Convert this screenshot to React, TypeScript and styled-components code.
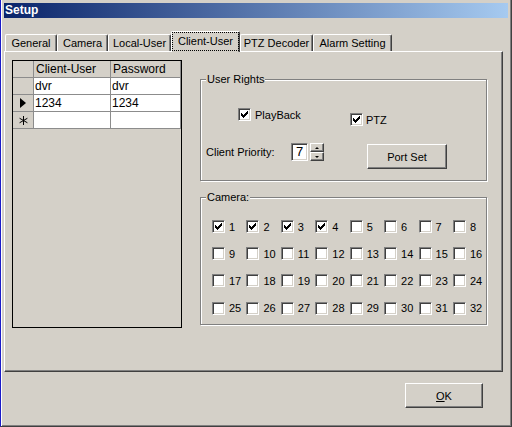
import React from 'react';
import styled, { createGlobalStyle } from 'styled-components';

const GlobalStyle = createGlobalStyle`
  html, body {
    margin: 0;
    padding: 0;
    background: #d4d0c8;
  }
  body {
    font-family: "Liberation Sans", Arial, sans-serif;
    font-size: 11px;
    color: #000;
  }
`;

const Window = styled.div`
  box-sizing: border-box;
  width: 512px;
  height: 427px;
  display: flex;
  flex-direction: column;
  padding: 3px 3px 0 3px;
  background: #d4d0c8;
  border-left: 1px solid #1c1cc8;
  border-right: 1px solid #404040;
  border-bottom: 1px solid #404040;
  box-shadow: inset 1px 0 0 #fff, inset -1px -1px 0 #808080;
`;

const TitleBar = styled.div`
  height: 15px;
  line-height: 15px;
  padding-left: 1px;
  background: linear-gradient(to right, #0a246a, #a6caf0);
  color: #fff;
  font-weight: bold;
  font-size: 12px;
`;

const TabStrip = styled.div`
  display: flex;
  align-items: flex-end;
  height: 20px;
  margin-top: 13px;
  padding-left: 1px;
  position: relative;
  z-index: 1;
`;

const Tab = styled.div<{ $w: number; $active?: boolean }>`
  box-sizing: border-box;
  width: ${p => p.$w}px;
  height: ${p => (p.$active ? 21 : 17)}px;
  margin-bottom: ${p => (p.$active ? -1 : 0)}px;
  padding-top: ${p => (p.$active ? 2 : 1)}px;
  line-height: 14px;
  text-align: center;
  white-space: nowrap;
  background: #d4d0c8;
  border-top: 1px solid #fff;
  border-left: 1px solid #fff;
  border-right: 1px solid #404040;
  border-top-left-radius: 2px;
  border-top-right-radius: 2px;
  box-shadow: inset -1px 0 0 #808080;
  outline: ${p => (p.$active ? '1px dotted #000' : 'none')};
  outline-offset: -2px;
`;

const Panel = styled.div`
  box-sizing: border-box;
  width: 499px;
  height: 321px;
  display: flex;
  align-items: flex-start;
  gap: 18px;
  padding: 8px 0 0 7px;
  border: 1px solid;
  border-color: #fff #404040 #404040 #fff;
  box-shadow: inset -1px -1px 0 #808080;
`;

const GridFrame = styled.div`
  box-sizing: border-box;
  width: 170px;
  height: 268px;
  border: 1px solid #000;
  background: #d4d0c8;
  font-size: 12px;
`;

const GridRows = styled.div`
  display: grid;
  grid-template-columns: 20px 76px 69px;
  grid-auto-rows: 16px;
  gap: 1px;
  width: fit-content;
  background: #8c8c8c;
  border-right: 1px solid #8c8c8c;
  border-bottom: 1px solid #8c8c8c;
`;

const Cell = styled.div<{ $head?: boolean }>`
  background: ${p => (p.$head ? '#d4d0c8' : '#fff')};
  padding-left: ${p => (p.$head ? 2 : 1)}px;
  line-height: 16px;
  white-space: nowrap;
  overflow: hidden;
`;

const RowHead = styled.div`
  background: #d4d0c8;
  display: flex;
  align-items: center;
  justify-content: center;
`;

const RightCol = styled.div`
  width: 287px;
  margin-top: 19px;
  display: flex;
  flex-direction: column;
  gap: 16px;
`;

const GroupBox = styled.div<{ $h: number; $pt: number; $pl: number }>`
  box-sizing: border-box;
  position: relative;
  height: ${p => p.$h}px;
  padding: ${p => p.$pt}px 0 0 ${p => p.$pl}px;
  border: 1px solid #808080;
  box-shadow: inset 1px 1px 0 #fff, 1px 1px 0 #fff;
`;

const Legend = styled.span`
  position: absolute;
  top: -7px;
  left: 5px;
  padding: 0 1px;
  line-height: 13px;
  background: #d4d0c8;
`;

const CheckRow = styled.div`
  display: flex;
  align-items: flex-start;
`;

const CheckItem = styled.label<{ $w?: number; $down?: number; $gap?: number }>`
  display: flex;
  align-items: center;
  gap: ${p => p.$gap ?? 4}px;
  width: ${p => (p.$w ? `${p.$w}px` : 'auto')};
  margin-top: ${p => p.$down ?? 0}px;
  height: 13px;
  white-space: nowrap;
`;

const Box = styled.span`
  box-sizing: border-box;
  flex: none;
  width: 13px;
  height: 13px;
  display: block;
  background: #fff;
  border: 1px solid;
  border-color: #808080 #fff #fff #808080;
  box-shadow: inset 1px 1px 0 #404040, inset -1px -1px 0 #d4d0c8;
`;

const PriorityRow = styled.div`
  display: flex;
  align-items: flex-start;
  margin-top: 17px;
  margin-left: -32px;
`;

const FieldLabel = styled.span`
  width: 85px;
  line-height: 18px;
`;

const Spinner = styled.div`
  display: flex;
  gap: 2px;
`;

const SpinEdit = styled.div`
  box-sizing: border-box;
  width: 17px;
  height: 18px;
  background: #fff;
  border: 1px solid;
  border-color: #808080 #fff #fff #808080;
  box-shadow: inset 1px 1px 0 #404040, inset -1px -1px 0 #d4d0c8;
  font-size: 13px;
  line-height: 16px;
  text-align: center;
`;

const SpinButtons = styled.div`
  display: flex;
  flex-direction: column;
  width: 14px;
  height: 18px;
`;

const SpinHalf = styled.div`
  box-sizing: border-box;
  flex: 1;
  display: flex;
  align-items: center;
  justify-content: center;
  border: 1px solid;
  border-color: #fff #404040 #404040 #fff;
  box-shadow: inset -1px -1px 0 #808080;
`;

const Arrow = styled.span<{ $up?: boolean }>`
  width: 0;
  height: 0;
  border-left: 2px solid transparent;
  border-right: 2px solid transparent;
  ${p => (p.$up ? 'border-bottom: 2px solid #000;' : 'border-top: 2px solid #000;')}
`;

const Button = styled.button<{ $w: number; $ml?: number; $mt?: number }>`
  box-sizing: border-box;
  width: ${p => p.$w}px;
  height: 25px;
  margin-left: ${p => p.$ml ?? 0}px;
  margin-top: ${p => p.$mt ?? 0}px;
  padding: 0;
  background: #d4d0c8;
  border: 1px solid;
  border-color: #fff #404040 #404040 #fff;
  box-shadow: inset -1px -1px 0 #808080;
  font-family: "Liberation Sans", Arial, sans-serif;
  font-size: 11px;
  color: #000;
`;

const CamGrid = styled.div`
  display: grid;
  grid-template-columns: repeat(8, 34.43px);
  grid-auto-rows: 13px;
  row-gap: 14.2px;
`;

const Footer = styled.div`
  display: flex;
  justify-content: flex-end;
  padding: 11px 25px 0 0;
`;

function Check({ checked }: { checked?: boolean }) {
  return (
    <Box>
      {checked && (
        <svg width="11" height="11" viewBox="0 0 11 11" shapeRendering="crispEdges" style={{ display: 'block' }}>
          <path
            fill="#000"
            d="M8 2h1v1h-1zM7 3h2v1h-2zM2 4h1v1h-1zM6 4h3v1h-3zM2 5h2v1h-2zM5 5h3v1h-3zM2 6h5v1h-5zM3 7h3v1h-3zM4 8h1v1h-1z"
          />
        </svg>
      )}
    </Box>
  );
}

const tabs = [
  { label: 'General', w: 52 },
  { label: 'Camera', w: 51 },
  { label: 'Local-User', w: 63 },
  { label: 'Client-User', w: 69, active: true },
  { label: 'PTZ Decoder', w: 73 },
  { label: 'Alarm Setting', w: 79 },
];

const users = [
  { mark: '', name: 'dvr', pass: 'dvr' },
  { mark: 'current', name: '1234', pass: '1234' },
  { mark: 'new', name: '', pass: '' },
];

export default function App() {
  const cams = Array.from({ length: 32 }, (_, i) => i + 1);
  return (
    <>
      <GlobalStyle />
      <Window>
        <TitleBar>Setup</TitleBar>
        <TabStrip>
          {tabs.map(t => (
            <Tab key={t.label} $w={t.w} $active={t.active}>
              {t.label}
            </Tab>
          ))}
        </TabStrip>
        <Panel>
          <GridFrame>
            <GridRows>
              <RowHead />
              <Cell $head>Client-User</Cell>
              <Cell $head>Password</Cell>
              {users.map((u, i) => (
                <React.Fragment key={i}>
                  <RowHead>
                    {u.mark === 'current' && (
                      <svg width="6" height="10" viewBox="0 0 6 10">
                        <path d="M0 0L6 5L0 10Z" fill="#000" />
                      </svg>
                    )}
                    {u.mark === 'new' && (
                      <svg width="9" height="9" viewBox="0 0 9 9">
                        <path d="M4.5 0v9M0.6 2.25l7.8 4.5M0.6 6.75l7.8-4.5" stroke="#000" strokeWidth="1" />
                      </svg>
                    )}
                  </RowHead>
                  <Cell>{u.name}</Cell>
                  <Cell>{u.pass}</Cell>
                </React.Fragment>
              ))}
            </GridRows>
          </GridFrame>
          <RightCol>
            <GroupBox $h={102} $pt={28} $pl={37}>
              <Legend>User Rights</Legend>
              <CheckRow>
                <CheckItem $w={112}>
                  <Check checked />
                  PlayBack
                </CheckItem>
                <CheckItem $down={5} $gap={3}>
                  <Check checked />
                  PTZ
                </CheckItem>
              </CheckRow>
              <PriorityRow>
                <FieldLabel>Client Priority:</FieldLabel>
                <Spinner>
                  <SpinEdit>7</SpinEdit>
                  <SpinButtons>
                    <SpinHalf>
                      <Arrow $up />
                    </SpinHalf>
                    <SpinHalf>
                      <Arrow />
                    </SpinHalf>
                  </SpinButtons>
                </Spinner>
                <Button $w={80} $ml={43} $mt={1}>
                  Port Set
                </Button>
              </PriorityRow>
            </GroupBox>
            <GroupBox $h={128} $pt={22} $pl={11}>
              <Legend>Camera:</Legend>
              <CamGrid>
                {cams.map(n => (
                  <CheckItem key={n}>
                    <Check checked={n <= 4} />
                    {n}
                  </CheckItem>
                ))}
              </CamGrid>
            </GroupBox>
          </RightCol>
        </Panel>
        <Footer>
          <Button $w={78}>
            <u>O</u>K
          </Button>
        </Footer>
      </Window>
    </>
  );
}
